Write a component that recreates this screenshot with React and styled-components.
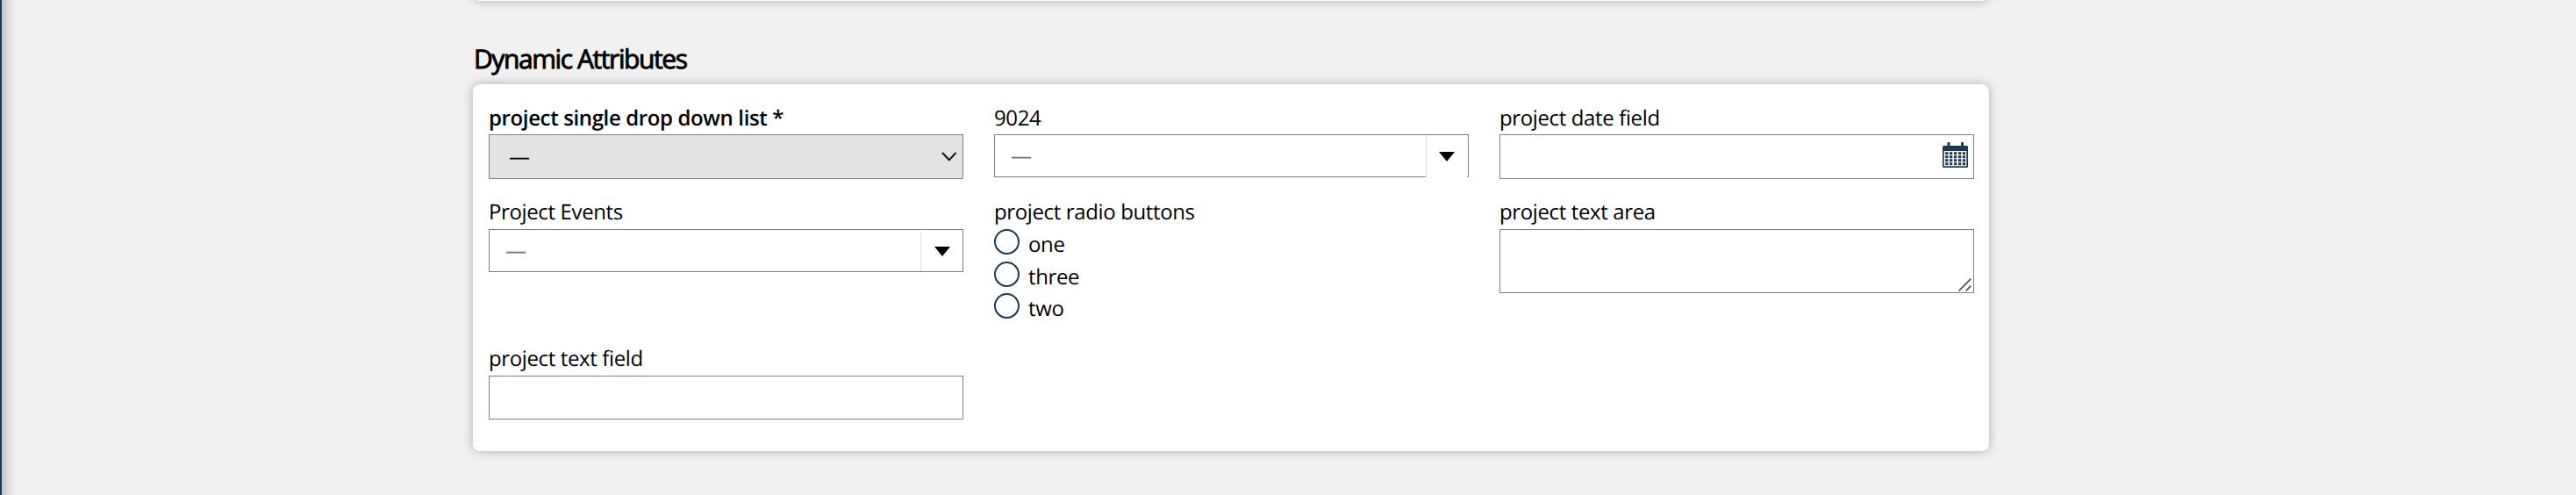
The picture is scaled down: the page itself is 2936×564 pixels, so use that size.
import React from 'react'
import styled, { createGlobalStyle } from 'styled-components'

const radioOptions = ['one', 'three', 'two']

const Caret = () => (
  <svg width="18" height="11" viewBox="0 0 18 11">
    <path d="M0 0H18L9 11Z" fill="#000" />
  </svg>
)

const Chevron = () => (
  <svg width="17" height="11" viewBox="0 0 17 11">
    <path d="M1 1L8.8 9.2L16.6 1" fill="none" stroke="#111" strokeWidth="2" />
  </svg>
)

const CalendarIcon = () => {
  const cols = [3.2, 8, 13, 18, 22.8]
  const rows = [11.2, 15.2, 19.2, 23.2]
  return (
    <svg width="29" height="29" viewBox="0 0 29 29" fill="#1b3b54">
      <rect x="5.5" y="0" width="3" height="6" rx="1" />
      <rect x="21" y="0" width="3" height="6" rx="1" />
      <path fillRule="evenodd" d="M1.5 4H27.5Q29 4 29 5.5V27.5Q29 29 27.5 29H1.5Q0 29 0 27.5V5.5Q0 4 1.5 4ZM1.7 10V27.3H27.3V10Z" />
      {rows.map((y) => cols.map((x) => <rect key={x + '-' + y} x={x} y={y} width="3.3" height="3" />))}
    </svg>
  )
}

const Resizer = () => (
  <Grip width="15" height="15" viewBox="0 0 15 15">
    <path d="M0.7 14.3L14.3 0.7M8.7 14.3L14.3 8.7" stroke="#555" strokeWidth="1.8" />
  </Grip>
)

const ComboField = ({ label, cut, labelHeight }) => (
  <Field>
    <Label $height={labelHeight}>{label}</Label>
    <Combo>
      <Placeholder>—</Placeholder>
      <ComboButton $cut={cut}>
        <Caret />
      </ComboButton>
    </Combo>
  </Field>
)

export default function App() {
  return (
    <>
      <GlobalStyle />
      <Page>
        <SideEdge />
        <EdgeShade />
        <Content>
          <PreviousCard />
          <Title>Dynamic Attributes</Title>
          <Card>
            <Field>
              <Label $required $height={36}>project single drop down list *</Label>
              <SelectBox>
                <span>—</span>
                <Chevron />
              </SelectBox>
            </Field>
            <ComboField label="9024" labelHeight={36} cut />
            <Field>
              <Label $height={36}>project date field</Label>
              <DateBox>
                <CalendarIcon />
              </DateBox>
            </Field>
            <ComboField label="Project Events" />
            <Field>
              <Label>project radio buttons</Label>
              {radioOptions.map((name) => (
                <RadioRow key={name}>
                  <Circle />
                  <RadioText>{name}</RadioText>
                </RadioRow>
              ))}
            </Field>
            <Field>
              <Label>project text area</Label>
              <TextArea>
                <Resizer />
              </TextArea>
            </Field>
            <Field>
              <Label>project text field</Label>
              <TextBox />
            </Field>
          </Card>
        </Content>
      </Page>
    </>
  )
}

const GlobalStyle = createGlobalStyle`
body {
  margin: 0;
  background: #f1f1f1;
}
`
const Page = styled.div`
display: flex;
width: 2936px;
height: 564px;
overflow: hidden;
background: #f1f1f1;
color: #000;
font-family: "Open Sans", "Noto Sans", sans-serif;
font-size: 24px;
line-height: 33px;
letter-spacing: -0.37px;
text-rendering: geometricPrecision;
`
const SideEdge = styled.div`
width: 2px;
background: #143a5c;
`
const EdgeShade = styled.div`
width: 18px;
background: linear-gradient(to right, #c6c6c6 0%, #d3d3d3 25%, #e3e3e3 52%, #eeeeee 80%, #f1f1f1 100%);
`
const Content = styled.div`
width: 1728px;
margin-left: 519px;
`
const PreviousCard = styled.div`
height: 20px;
margin-top: -19px;
background: #fff;
border-radius: 8px;
box-shadow: 0 0 12px rgba(0, 0, 0, 0.28);
`
const Title = styled.h2`
margin: 45px 0 9px;
padding-left: 1px;
font-size: 30px;
line-height: 41px;
font-weight: 400;
letter-spacing: -1.42px;
-webkit-text-stroke: 0.9px #000;
white-space: nowrap;
`
const Card = styled.div`
box-sizing: border-box;
display: grid;
grid-template-columns: repeat(3, 541px);
grid-template-rows: 87px 147px 87px;
gap: 20px 35px;
height: 418px;
padding: 21px 17px 36px 18px;
background: #fff;
border-radius: 8px;
box-shadow: 0 0 12px rgba(0, 0, 0, 0.28);
`
const Field = styled.div`
display: flex;
flex-direction: column;
`
const Label = styled.div`
box-sizing: border-box;
height: ${(props) => props.$height || 37}px;
padding-top: 1px;
font-weight: ${(props) => (props.$required ? 600 : 400)};
white-space: nowrap;
`
const Box = styled.div`
box-sizing: border-box;
display: flex;
align-items: center;
justify-content: space-between;
border: 1px solid #808080;
background: #fff;
`
const SelectBox = styled(Box)`
height: 51px;
padding: 0 7px 0 22px;
background: #e4e4e4;
`
const DateBox = styled(Box)`
height: 51px;
justify-content: flex-end;
padding: 0 6px 4px 0;
`
const Combo = styled(Box)`
height: 49px;
padding-left: 18px;
`
const Placeholder = styled.span`
color: #757575;
`
const ComboButton = styled.div`
box-sizing: border-box;
display: flex;
align-self: flex-start;
align-items: center;
justify-content: center;
width: ${(props) => (props.$cut ? 47 : 48)}px;
height: ${(props) => (props.$cut ? 47 : 46)}px;
margin-top: 1px;
margin-right: ${(props) => (props.$cut ? 1 : 0)}px;
border-left: 1px solid #ddd;
background: #fff;
`
const RadioRow = styled.div`
display: flex;
height: 37px;
`
const Circle = styled.span`
box-sizing: border-box;
width: 29px;
height: 29px;
border: 2px solid #1b3b54;
border-radius: 50%;
`
const RadioText = styled.span`
margin: 1px 0 0 10px;
`
const TextArea = styled(Box)`
position: relative;
height: 73px;
`
const Grip = styled.svg`
position: absolute;
right: 2px;
bottom: 1px;
`
const TextBox = styled(Box)`
height: 50px;
`
